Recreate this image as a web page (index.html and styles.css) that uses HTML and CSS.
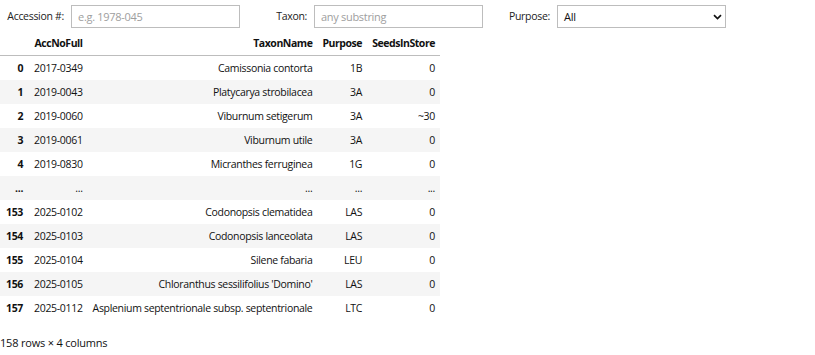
FILE: index.html
```html
<!DOCTYPE html>
<html>
<head>
<meta charset="utf-8">
<link rel="stylesheet" href="styles.css">
</head>
<body>
<div class="controls">
  <div class="widget">
    <label class="wlabel">Accession #:</label>
    <input class="winput" type="text" placeholder="e.g. 1978-045">
  </div>
  <div class="widget">
    <label class="wlabel">Taxon:</label>
    <input class="winput" type="text" placeholder="any substring">
  </div>
  <div class="widget">
    <label class="wlabel">Purpose:</label>
    <div class="wselect">
      <span class="sel-text">All</span>
      <svg class="chev" width="9" height="6" viewBox="0 0 9 6"><path d="M1 1.2 L4.5 4.6 L8 1.2" fill="none" stroke="#111" stroke-width="1.7"/></svg>
    </div>
  </div>
</div>
<table class="df">
  <thead>
    <tr><th></th><th>AccNoFull</th><th>TaxonName</th><th>Purpose</th><th>SeedsInStore</th></tr>
  </thead>
  <tbody>
    <tr><th>0</th><td>2017-0349</td><td>Camissonia contorta</td><td>1B</td><td>0</td></tr>
    <tr><th>1</th><td>2019-0043</td><td>Platycarya strobilacea</td><td>3A</td><td>0</td></tr>
    <tr><th>2</th><td>2019-0060</td><td>Viburnum setigerum</td><td>3A</td><td>~30</td></tr>
    <tr><th>3</th><td>2019-0061</td><td>Viburnum utile</td><td>3A</td><td>0</td></tr>
    <tr><th>4</th><td>2019-0830</td><td>Micranthes ferruginea</td><td>1G</td><td>0</td></tr>
    <tr><th>...</th><td>...</td><td>...</td><td>...</td><td>...</td></tr>
    <tr><th>153</th><td>2025-0102</td><td>Codonopsis clematidea</td><td>LAS</td><td>0</td></tr>
    <tr><th>154</th><td>2025-0103</td><td>Codonopsis lanceolata</td><td>LAS</td><td>0</td></tr>
    <tr><th>155</th><td>2025-0104</td><td>Silene fabaria</td><td>LEU</td><td>0</td></tr>
    <tr><th>156</th><td>2025-0105</td><td>Chloranthus sessilifolius 'Domino'</td><td>LAS</td><td>0</td></tr>
    <tr><th>157</th><td>2025-0112</td><td>Asplenium septentrionale subsp. septentrionale</td><td>LTC</td><td>0</td></tr>
  </tbody>
</table>
<p class="shape">158 rows × 4 columns</p>
</body>
</html>
```
FILE: styles.css
```css
html, body {
  margin: 0;
  padding: 0;
  background: #fff;
  color: #111;
  font-family: "Open Sans", "Noto Sans", sans-serif;
}
.controls {
  display: flex;
  padding-top: 5px;
  height: 26px;
}
.widget {
  width: 243px;
  display: flex;
  align-items: flex-start;
}
.wlabel {
  width: 64px;
  padding-right: 3px;
  text-align: right;
  font-size: 10.5px;
  letter-spacing: -0.3px;
  line-height: 23px;
  color: #222;
  white-space: nowrap;
}
.winput {
  margin: 0 0 0 4px;
  width: 169px;
  height: 23px;
  box-sizing: border-box;
  border: 1px solid #bdbdbd;
  padding: 0 6px;
  font-family: inherit;
  font-size: 11px;
  letter-spacing: -0.3px;
  color: #222;
  outline: none;
}
.winput::placeholder {
  color: #9e9e9e;
}
.wselect {
  margin-left: 4px;
  width: 169px;
  height: 23px;
  box-sizing: border-box;
  border: 1px solid #bdbdbd;
  display: flex;
  align-items: center;
  justify-content: space-between;
  padding: 0 3px 0 6px;
  font-size: 11px;
  letter-spacing: -0.3px;
  color: #111;
}
.chev {
  display: block;
}
.df {
  border-collapse: collapse;
  border-spacing: 0;
  font-size: 10.5px;
  letter-spacing: -0.32px;
  color: #111;
}
.df th, .df td {
  text-align: right;
  vertical-align: middle;
  padding: 4px 5px;
  line-height: 16px;
  white-space: nowrap;
  border: none;
}
.df tr > :first-child {
  padding-left: 6px;
}
.df tr > :nth-child(2) {
  padding-left: 6px;
}
.df th {
  font-weight: bold;
}
.df thead th {
  letter-spacing: -0.45px;
  border-bottom: 1px solid #bdbdbd;
}
.df tbody tr:nth-child(even) {
  background: #f5f5f5;
}
.shape {
  margin: 15px 0 0 0;
  font-size: 11px;
  letter-spacing: -0.2px;
  line-height: 16px;
  color: #111;
}
```
